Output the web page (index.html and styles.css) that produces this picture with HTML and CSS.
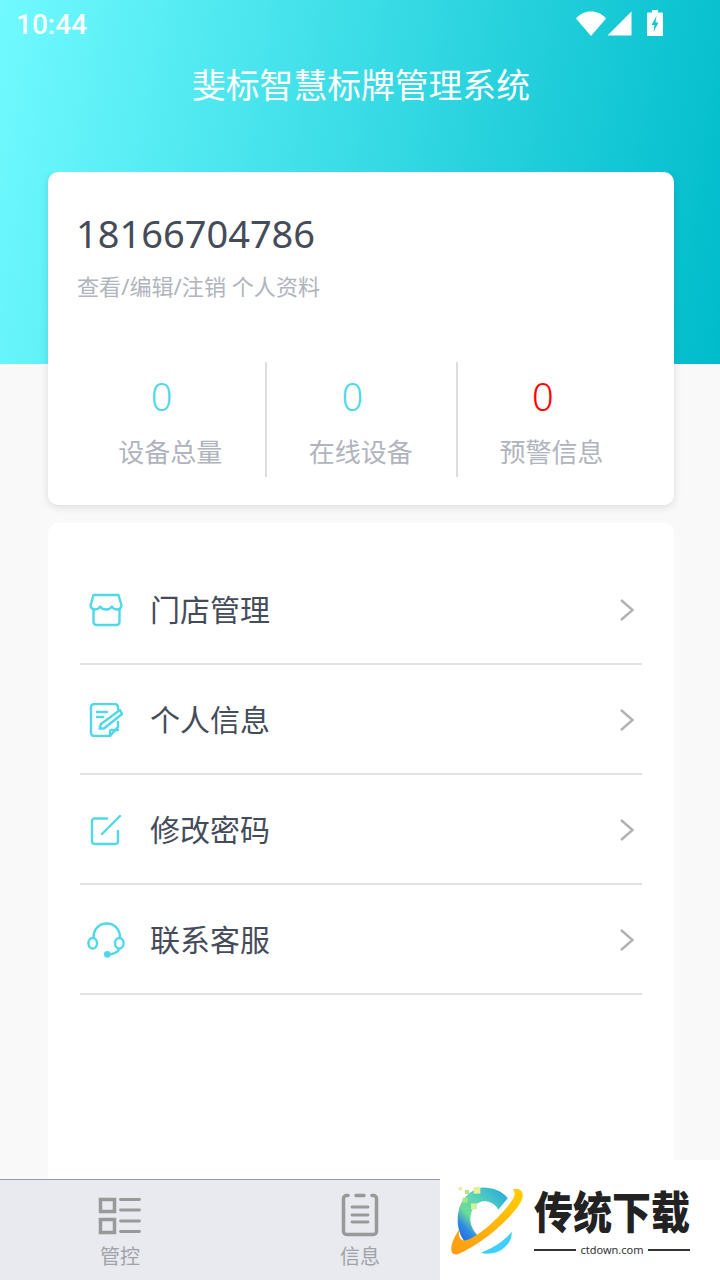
FILE: index.html
```html
<!DOCTYPE html>
<html lang="zh-CN">
<head>
    <meta charset="UTF-8">
    <title>斐标智慧标牌管理系统</title>
    <link rel="stylesheet" href="styles.css">
</head>
<body>
    <div class="page">
        <header class="hero">
            <div class="status-bar">
                <span class="time">10:44</span>
                <div class="status-icons">
                    <svg width="30" height="26" viewBox="0 0 30 26"><path d="M0 8.500C4 3.800 9 1.500 15 1.500S26 3.800 30 8.500L15 26Z"/></svg>
                    <svg width="25" height="26" viewBox="0 0 25 26"><path d="M24.500 1.500V25.500H.5Z"/></svg>
                    <svg class="battery" width="18" height="28" viewBox="0 0 18 28"><path fill-rule="evenodd" d="M6 1H12V3.500H16A1 1 0 0 1 17 4.500V26A1 1 0 0 1 16 27H2A1 1 0 0 1 1 26V4.500A1 1 0 0 1 2 3.500H6ZM10.500 7 5.500 16H8.500L7.500 23 12.500 13.500H9.500Z"/></svg>
                </div>
            </div>
            <h1 class="app-title">斐标智慧标牌管理系统</h1>
        </header>

        <main class="content">
            <section class="card profile">
                <div class="phone">18166704786</div>
                <div class="profile-link">查看/编辑/注销 个人资料</div>
                <div class="stats">
                    <div class="stat">
                        <span class="stat-num">0</span>
                        <span class="stat-label">设备总量</span>
                    </div>
                    <div class="stat">
                        <span class="stat-num">0</span>
                        <span class="stat-label">在线设备</span>
                    </div>
                    <div class="stat">
                        <span class="stat-num alert">0</span>
                        <span class="stat-label">预警信息</span>
                    </div>
                </div>
            </section>

            <section class="card menu">
                <div class="menu-row">
                    <svg class="menu-icon" width="34" height="34" viewBox="0 0 34 34"><path d="M4.500 2H29.500L32.500 12.500C32 15.500 29.800 16.500 27.800 16.500 25.800 16.500 24 15.500 22.800 13.500 21.800 15.500 19.600 16.500 17 16.500S12.200 15.500 11.200 13.500C10 15.500 8.200 16.500 6.200 16.500 4.200 16.500 2 15.500 1.500 12.500Z"/><path d="M4.500 16V29A3 3 0 0 0 7.500 32H27.500A3 3 0 0 0 30.500 29V16"/></svg>
                    <span class="menu-text">门店管理</span>
                    <svg class="chevron" width="16" height="24" viewBox="0 0 16 24"><path d="M2 2 13.500 12 2 22"/></svg>
                </div>
                <div class="menu-row">
                    <svg class="menu-icon" width="34" height="34" viewBox="0 0 34 34"><path d="M29 6V4A3 3 0 0 0 26 1H5A3 3 0 0 0 2 4V30A3 3 0 0 0 5 33H21L29 24V19"/><path d="M21 33V28.500A1.500 1.500 0 0 1 22.500 27H29"/><path d="M8 9H18M8 14H14"/><path d="M10.500 25.500 12 21 31 7 33 11 15 25.500Z"/></svg>
                    <span class="menu-text">个人信息</span>
                    <svg class="chevron" width="16" height="24" viewBox="0 0 16 24"><path d="M2 2 13.500 12 2 22"/></svg>
                </div>
                <div class="menu-row">
                    <svg class="menu-icon" width="34" height="34" viewBox="0 0 34 34"><path d="M18 5.500H5.500A2.500 2.500 0 0 0 3 8V28.500A2.500 2.500 0 0 0 5.500 31H26.500A2.500 2.500 0 0 0 29 28.500V18"/><path d="M13 21 31 3"/></svg>
                    <span class="menu-text">修改密码</span>
                    <svg class="chevron" width="16" height="24" viewBox="0 0 16 24"><path d="M2 2 13.500 12 2 22"/></svg>
                </div>
                <div class="menu-row">
                    <svg class="menu-icon" width="38" height="38" viewBox="0 0 38 38"><path d="M6.500 17C6.500 8 12 2.500 19.700 2.500S33 8 33 17"/><ellipse cx="5.700" cy="22.300" rx="4.300" ry="5.300"/><ellipse cx="32.300" cy="22.300" rx="4.300" ry="5.300"/><path d="M32.300 28C31 31 27 33 21 33.500"/><circle class="dot" cx="20.300" cy="33.300" r="2.200"/></svg>
                    <span class="menu-text">联系客服</span>
                    <svg class="chevron" width="16" height="24" viewBox="0 0 16 24"><path d="M2 2 13.500 12 2 22"/></svg>
                </div>
            </section>
        </main>

        <nav class="tabbar">
            <div class="tab">
                <svg class="tab-icon" width="44" height="44" viewBox="0 0 44 44"><rect x="2.500" y="6.500" width="14" height="12"/><rect x="2.500" y="26.500" width="14" height="13"/><path class="thin" d="M22.500 6.500H41.500M22.500 17H41.500M22.500 28H41.500M22.500 38.500H41.500"/></svg>
                <span class="tab-label">管控</span>
            </div>
            <div class="tab">
                <svg class="tab-icon" width="44" height="44" viewBox="0 0 44 44"><path d="M10 2.500H8.500A3 3 0 0 0 5.500 5.500V38.500A3 3 0 0 0 8.500 41.500H35.500A3 3 0 0 0 38.500 38.500V5.500A3 3 0 0 0 35.500 2.500H34M18 2.500H26"/><path class="thin" d="M14 14H30M14 22H30M14 29H30"/></svg>
                <span class="tab-label">信息</span>
            </div>
        </nav>

        <div class="watermark">
            <svg class="wm-logo" width="90" height="120" viewBox="0 0 270 360">
                <defs>
                    <linearGradient id="ringGrad" x1="1" y1="0" x2="0" y2="1">
                        <stop offset="0" stop-color="#ffcf00"/>
                        <stop offset="1" stop-color="#ff9a14"/>
                    </linearGradient>
                    <linearGradient id="cGrad" x1="1" y1="0" x2="0" y2="1">
                        <stop offset="0" stop-color="#1ba6e6"/>
                        <stop offset=".45" stop-color="#5fd6b4"/>
                        <stop offset=".65" stop-color="#6cdc94"/>
                        <stop offset=".8" stop-color="#2f8be6"/>
                        <stop offset="1" stop-color="#1c5fe0"/>
                    </linearGradient>
                </defs>
                <path fill="url(#cGrad)" d="M120 80C150 78 185 90 200 112L172 146C160 125 140 118 120 122 100 128 88 150 88 175 88 195 100 215 118 232 105 240 85 243 70 240 50 215 45 175 55 140 65 110 90 85 120 80Z"/>
                <path fill="url(#ringGrad)" d="M215 85C245 78 255 100 235 130 200 185 110 255 50 280 30 285 25 265 38 235 42 225 50 212 55 205 52 225 55 240 75 238 120 225 195 150 218 110 222 100 222 92 215 85Z"/>
                <path fill="#3fcfff" d="M120 275C160 260 195 235 212 212 215 240 190 270 155 277 140 279 130 278 120 275Z"/>
                <rect fill="#e8eda0" x="53" y="78" width="10" height="10"/>
                <rect fill="#b5e67d" x="72" y="87" width="12" height="12"/>
                <rect fill="#e6f09a" x="98" y="78" width="20" height="20"/>
                <rect fill="#a5e58a" x="65" y="110" width="15" height="15"/>
                <rect fill="#d3efa0" x="90" y="127" width="18" height="18"/>
            </svg>
            <div class="wm-text">
                <div class="wm-title">传统下载</div>
                <div class="wm-url"><span class="wm-line"></span>ctdown.com<span class="wm-line"></span></div>
            </div>
        </div>
    </div>
</body>
</html>
```

FILE: styles.css
```css
* {
    box-sizing: border-box;
}

body {
    margin: 0;
    font-family: "Noto Sans", "Noto Sans CJK SC", sans-serif;
    background-color: #f9f9f9;
    color: #454c59;
}

.page {
    position: relative;
    display: flex;
    flex-direction: column;
    height: 1280px;
    overflow: hidden;
}

.hero {
    flex: none;
    height: 364px;
    padding: 11px 56px 0 16px;
    background: linear-gradient(100deg, #70faff 0%, #00bccb 100%);
    color: #fff;
}

.status-bar {
    display: flex;
    justify-content: space-between;
    align-items: center;
    height: 28px;
}

.time {
    font-family: Roboto, sans-serif;
    font-size: 28px;
    line-height: 28px;
    font-weight: 500;
}

.status-icons {
    display: flex;
    align-items: center;
    gap: 1px;
    padding-bottom: 4px;
}

.status-icons svg {
    fill: #fff;
}

.battery {
    margin-left: 13px;
}

.app-title {
    margin: 23px 0 0 176px;
    font-size: 33.8px;
    line-height: 46px;
    font-weight: 400;
}

.content {
    flex: 1;
    display: flex;
    flex-direction: column;
    gap: 18px;
    min-height: 0;
    margin-top: -192px;
    padding: 0 46px 0 48px;
    overflow: hidden;
}

.card {
    background-color: #fff;
    border-radius: 10px;
}

.profile {
    flex: none;
    height: 333px;
    padding: 35px 28px 0 29px;
    box-shadow: 0 2px 8px rgba(0, 0, 0, 0.12);
}

.phone {
    margin-left: -1px;
    font-size: 38px;
    line-height: 52px;
}

.profile-link {
    margin-top: 12px;
    font-size: 22.1px;
    line-height: 30px;
    color: #b0b4bd;
}

.stats {
    display: flex;
    margin-top: 61px;
    margin-left: -0.7px;
}

.stat {
    flex: none;
    display: flex;
    flex-direction: column;
    align-items: center;
    width: 190.67px;
    height: 115px;
    border-right: 2px solid #ddd;
}

.stat:last-child {
    border-right-color: transparent;
}

.stat-num {
    margin-top: 8px;
    margin-right: 18px;
    font-size: 38px;
    line-height: 52px;
    font-weight: 300;
    color: #4fd9e6;
}

.stat-num.alert {
    color: #ff0000;
}

.stat-label {
    margin-top: 12px;
    margin-right: 1px;
    font-size: 26px;
    line-height: 36px;
    color: #b0b4bd;
}

.menu {
    flex: none;
    height: 680px;
    padding: 32px 32px 0;
}

.menu-row {
    display: flex;
    align-items: center;
    height: 110px;
    padding-right: 7px;
    border-bottom: 2px solid #e2e2e2;
}

.menu-icon {
    flex: none;
    margin-top: 2px;
    margin-left: 9px;
    margin-right: 27px;
    fill: none;
    stroke: #4fd9e6;
    stroke-width: 2.4;
    stroke-linecap: round;
    stroke-linejoin: round;
}

.menu-icon .dot {
    fill: #4fd9e6;
}

.menu-row:last-child .menu-icon {
    margin-left: 7px;
    margin-right: 25px;
}

.menu-text {
    flex: 1;
    padding-top: 2px;
    font-size: 30px;
    line-height: 40px;
}

.chevron {
    margin-top: 2px;
    fill: none;
    stroke: #b0b2b6;
    stroke-width: 2.4;
}

.tabbar {
    flex: none;
    display: grid;
    grid-template-columns: repeat(3, 1fr);
    height: 101px;
    padding-top: 13px;
    background-color: #e9eaef;
    border-top: 1px solid #9a9a9a;
}

.tab {
    display: flex;
    flex-direction: column;
    align-items: center;
}

.tab-icon {
    fill: none;
    stroke: #999;
    stroke-width: 3.5;
    stroke-linecap: round;
}

.tab-icon .thin {
    stroke-width: 2.8;
}

.tab-label {
    margin-top: 6px;
    font-size: 20px;
    line-height: 28px;
    color: #a0a2a9;
}

.watermark {
    position: absolute;
    right: 0;
    bottom: 0;
    display: flex;
    width: 280px;
    height: 120px;
    background-color: #fff;
}

.wm-logo {
    margin-top: 1px;
    margin-left: 1px;
}

.wm-text {
    margin-left: 3px;
    width: 156px;
    padding-top: 26px;
}

.wm-title {
    font-size: 39px;
    line-height: 52px;
    font-weight: 900;
    color: #222;
    white-space: nowrap;
    transform: scaleY(1.14);
}

.wm-url {
    display: flex;
    align-items: center;
    gap: 4px;
    margin-top: 2px;
    font-size: 11px;
    line-height: 20px;
    color: #333;
}

.wm-line {
    flex: 1;
    height: 2px;
    background-color: #333;
}
```
